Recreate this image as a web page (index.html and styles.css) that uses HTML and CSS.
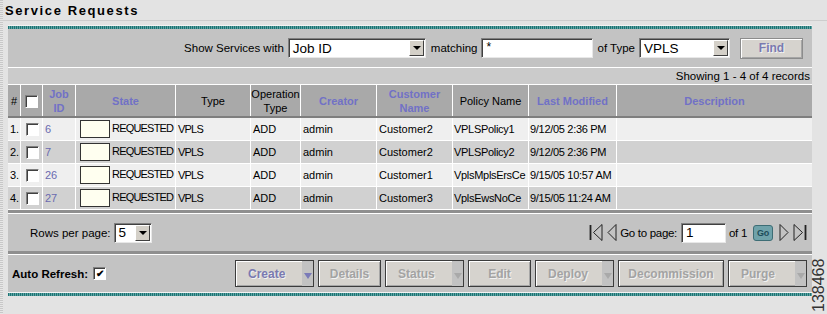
FILE: index.html
```html
<!DOCTYPE html>
<html lang="en">
<head>
    <meta charset="UTF-8">
    <title>Service Requests</title>
    <link rel="stylesheet" href="styles.css">
</head>
<body>
    <div class="page">
        <h1 class="title">Service Requests</h1>

        <div class="panel">
            <div class="band"></div>

            <div class="filter">
                <span>Show Services with</span>
                <div class="select sel-field"><span>Job ID</span><i class="drop"></i></div>
                <span>matching</span>
                <div class="input in-match">*</div>
                <span>of Type</span>
                <div class="select sel-type"><span>VPLS</span><i class="drop"></i></div>
                <button class="btn btn-find">Find</button>
            </div>

            <div class="count">Showing 1 - 4 of 4 records</div>

            <table class="grid">
                <thead>
                    <tr>
                        <th class="c-num">#</th>
                        <th class="c-chk"><span class="check"></span></th>
                        <th class="c-id sort">Job<br>ID</th>
                        <th class="c-state sort">State</th>
                        <th class="c-type">Type</th>
                        <th class="c-op">Operation<br>Type</th>
                        <th class="c-creator sort">Creator</th>
                        <th class="c-cust sort">Customer<br>Name</th>
                        <th class="c-policy">Policy Name</th>
                        <th class="c-mod sort">Last Modified</th>
                        <th class="c-desc sort">Description</th>
                    </tr>
                </thead>
                <tbody>
                    <tr>
                        <td>1.</td><td><span class="check"></span></td><td class="link">6</td>
                        <td><span class="swatch"></span><span class="caps">REQUESTED</span></td><td class="caps">VPLS</td><td>ADD</td><td>admin</td>
                        <td>Customer2</td><td class="narrow">VPLSPolicy1</td><td class="narrow">9/12/05 2:36 PM</td><td></td>
                    </tr>
                    <tr>
                        <td>2.</td><td><span class="check"></span></td><td class="link">7</td>
                        <td><span class="swatch"></span><span class="caps">REQUESTED</span></td><td class="caps">VPLS</td><td>ADD</td><td>admin</td>
                        <td>Customer2</td><td class="narrow">VPLSPolicy2</td><td class="narrow">9/12/05 2:36 PM</td><td></td>
                    </tr>
                    <tr>
                        <td>3.</td><td><span class="check"></span></td><td class="link">26</td>
                        <td><span class="swatch"></span><span class="caps">REQUESTED</span></td><td class="caps">VPLS</td><td>ADD</td><td>admin</td>
                        <td>Customer1</td><td class="narrow">VplsMplsErsCe</td><td class="narrow">9/15/05 10:57 AM</td><td></td>
                    </tr>
                    <tr>
                        <td>4.</td><td><span class="check"></span></td><td class="link">27</td>
                        <td><span class="swatch"></span><span class="caps">REQUESTED</span></td><td class="caps">VPLS</td><td>ADD</td><td>admin</td>
                        <td>Customer3</td><td class="narrow">VplsEwsNoCe</td><td class="narrow">9/15/05 11:24 AM</td><td></td>
                    </tr>
                </tbody>
            </table>

            <div class="sep"></div>

            <div class="pager">
                <div class="rows">
                    <span>Rows per page:</span>
                    <div class="select sel-rows"><span>5</span><i class="drop"></i></div>
                </div>
                <div class="nav">
                    <svg width="15" height="19" viewBox="0 0 15 19"><path d="M1.5 2v15" stroke="#222" stroke-width="1.8" fill="none"/><path d="M13 1.5L4.5 9.5l8.5 8z" stroke="#222" fill="none"/></svg>
                    <svg width="10" height="19" viewBox="0 0 10 19"><path d="M9 1.5L1 9.5l8 8z" stroke="#222" fill="none"/></svg>
                    <span>Go to page:</span>
                    <div class="input in-page">1</div>
                    <span>of 1</span>
                    <span class="go">Go</span>
                    <svg width="10" height="19" viewBox="0 0 10 19"><path d="M1 1.5l8 8-8 8z" stroke="#222" fill="none"/></svg>
                    <svg width="15" height="19" viewBox="0 0 15 19"><path d="M2 1.5l8.5 8-8.5 8z" stroke="#222" fill="none"/><path d="M13.5 2v15" stroke="#222" stroke-width="1.8" fill="none"/></svg>
                </div>
            </div>

            <div class="sep"></div>

            <div class="actions">
                <label class="auto">Auto Refresh: <span class="check checked">&#10004;</span></label>
                <div class="buttons">
                    <button class="btn btn-create split">Create<i class="arrow"></i></button>
                    <button class="btn btn-details">Details</button>
                    <button class="btn btn-status split">Status<i class="arrow"></i></button>
                    <button class="btn btn-edit">Edit</button>
                    <button class="btn btn-deploy split">Deploy<i class="arrow"></i></button>
                    <button class="btn btn-decom">Decommission</button>
                    <button class="btn btn-purge split">Purge<i class="arrow"></i></button>
                </div>
            </div>

            <div class="band"></div>
        </div>
    </div>
    <div class="fig-id">138468</div>
</body>
</html>
```

FILE: styles.css
```css
body {
    margin: 0;
    background: #e3e3e3;
    font-family: "Liberation Sans", Arial, sans-serif;
    font-size: 11px;
    color: #000;
}
.page {
    min-height: 314px;
    background: repeating-linear-gradient(180deg, #c8c8c8 0 1px, #e6e6e6 1px 2px) left top / 3px 100% no-repeat;
}
.title {
    margin: 0;
    height: 21px;
    padding-left: 5px;
    font-size: 13px;
    line-height: 21px;
    letter-spacing: 1.6px;
    font-weight: bold;
    border-bottom: 1px solid #cdcdcd;
    box-sizing: border-box;
}
.panel {
    margin: 4px 0 0 8px;
    width: 804px;
    background: #c3c3c3;
}
.band {
    height: 4px;
    box-sizing: border-box;
    border-top: 1px solid #f4f4f4;
    background: repeating-linear-gradient(90deg, #1d7474 0 1px, #5ea3a3 1px 2px);
}
.filter {
    height: 38px;
    display: flex;
    align-items: center;
    justify-content: flex-end;
    padding-right: 9px;
    gap: 4px;
    border-bottom: 1px solid #fff;
    font-size: 11.5px;
}
.select, .input {
    height: 20px;
    box-sizing: border-box;
    background: #fff;
    border: 1px solid #808080;
    border-right-color: #e8e8e8;
    border-bottom-color: #e8e8e8;
    box-shadow: inset 1px 1px 0 #404040;
    display: flex;
    align-items: center;
    font-size: 13.5px;
    padding-left: 4px;
}
.select span {
    flex: 1;
}
.drop {
    width: 15px;
    height: 16px;
    margin-right: 1px;
    background: #d4d0c8;
    border: 1px solid;
    border-color: #fff #404040 #404040 #fff;
    box-sizing: border-box;
    position: relative;
}
.drop::after {
    content: "";
    position: absolute;
    left: 3px;
    top: 5px;
    border: 4px solid transparent;
    border-top: 4px solid #000;
    border-bottom: 0;
}
.sel-field {
    width: 138px;
    margin-right: 1px;
}
.in-match {
    width: 112px;
    font-size: 12px;
    align-items: flex-start;
    padding-top: 1px;
}
.sel-type {
    width: 91px;
    margin-right: 6px;
}
.btn {
    height: 27px;
    box-sizing: border-box;
    background: #d6d3ce;
    border: 1px solid #3c3c3c;
    box-shadow: inset 1px 1px 0 #fff, inset -1px -1px 0 #a6a6a6;
    font-family: "Liberation Sans", Arial, sans-serif;
    font-size: 12px;
    font-weight: bold;
    color: #a3a3a3;
    text-shadow: 1px 1px 0 #f2f2f2;
    padding: 0;
    display: flex;
    align-items: center;
    justify-content: center;
}
.btn-find {
    width: 63px;
    height: 21px;
    color: #7a7ab0;
    border-color: #8c8c8c;
}
.count {
    height: 16px;
    line-height: 16px;
    text-align: right;
    padding-right: 2px;
    background: #cbcbcb;
    font-size: 11.5px;
    border-bottom: 1px solid #fff;
}
.grid {
    width: 100%;
    border-collapse: collapse;
    table-layout: fixed;
}
.grid th {
    height: 31px;
    background: #a9a9a9;
    border-left: 1px solid #fff;
    border-bottom: 2px solid #7e7e7e;
    font-size: 11px;
    font-weight: normal;
    line-height: 14px;
    padding: 0;
}
.grid th:first-child, .grid td:first-child {
    border-left: 0;
}
.grid th.sort {
    color: #7171c6;
    font-weight: bold;
}
.grid td {
    height: 22px;
    padding: 0 0 0 2px;
    border-left: 1px solid #fff;
    border-bottom: 1px solid #fff;
    font-size: 11px;
    white-space: nowrap;
    overflow: hidden;
}
.grid tbody tr:nth-child(odd) td {
    background: #efefef;
}
.grid tbody tr:nth-child(even) td {
    background: #d1d1d1;
}
.grid td.link {
    color: #6a6ab0;
}
.caps {
    letter-spacing: -0.8px;
}
.grid td.narrow {
    letter-spacing: -0.3px;
    padding-left: 1px;
}
.c-num { width: 12px; }
.c-chk { width: 21px; }
.c-id { width: 32px; }
.c-state { width: 99px; }
.c-type { width: 74px; }
.c-op { width: 49px; }
.c-creator { width: 75px; }
.c-cust { width: 75px; }
.c-policy { width: 75px; }
.c-mod { width: 87px; }
.check {
    display: inline-block;
    width: 13px;
    height: 13px;
    box-sizing: border-box;
    background: #fff;
    border: 1px solid #808080;
    border-right-color: #fff;
    border-bottom-color: #fff;
    box-shadow: inset 1px 1px 0 #404040;
    vertical-align: middle;
    margin-left: 3px;
    font-size: 10px;
    line-height: 12px;
    text-align: center;
}
.grid th .check {
    margin-left: 0;
}
.swatch {
    display: inline-block;
    width: 30px;
    height: 18px;
    box-sizing: border-box;
    border: 1px solid #333;
    background: #fffff0;
    vertical-align: middle;
    margin: 0 2px 0 4px;
}
.grid td:nth-child(4) {
    padding-left: 0;
}
.sep {
    height: 4px;
    box-sizing: border-box;
    border-top: 3px solid #8f8f8f;
    border-bottom: 1px solid #fff;
    background: #c3c3c3;
}
.pager {
    height: 37px;
    display: flex;
    align-items: center;
    justify-content: space-between;
    padding: 0 5px 0 22px;
    font-size: 11.5px;
}
.rows, .nav {
    display: flex;
    align-items: center;
    gap: 3px;
}
.sel-rows {
    width: 38px;
}
.in-page {
    width: 45px;
    margin-left: 1px;
}
.nav span {
    letter-spacing: -0.3px;
}
.go {
    display: inline-block;
    width: 18px;
    height: 14px;
    line-height: 14px;
    text-align: center;
    font-size: 9px;
    font-weight: bold;
    color: #1e4d5a;
    background: #6fa2aa;
    border: 1px solid #3d6d75;
    border-radius: 3px;
    margin: 0 3px;
}
.actions {
    height: 37px;
    display: flex;
    align-items: center;
    justify-content: space-between;
    padding: 0 5px 0 4px;
}
.auto {
    font-weight: bold;
    font-size: 11.5px;
    display: flex;
    align-items: center;
    gap: 2px;
}
.buttons {
    display: flex;
    gap: 4px;
}
.btn.split {
    justify-content: flex-start;
}
.arrow {
    width: 11px;
    height: 25px;
    margin-left: auto;
    background: #c2c2c2;
    position: relative;
}
.arrow::after {
    content: "";
    position: absolute;
    left: 2px;
    top: 12px;
    border: 4px solid transparent;
    border-top: 6px solid #a9a9a9;
    border-bottom: 0;
}
.btn-create { width: 79px; color: #7a7ab0; }
.btn-create .arrow::after { border-top-color: #7a7ab8; }
.btn-details { width: 63px; }
.btn-status { width: 79px; }
.btn-edit { width: 63px; }
.btn-deploy { width: 79px; }
.btn-decom { width: 106px; }
.btn-purge { width: 79px; }
.btn-create, .btn-status, .btn-deploy, .btn-purge {
    text-indent: 12px;
}
.fig-id {
    position: absolute;
    left: 811px;
    top: 312px;
    transform: rotate(-90deg);
    transform-origin: left top;
    font-size: 16px;
    color: #333;
    line-height: 15px;
}
```
